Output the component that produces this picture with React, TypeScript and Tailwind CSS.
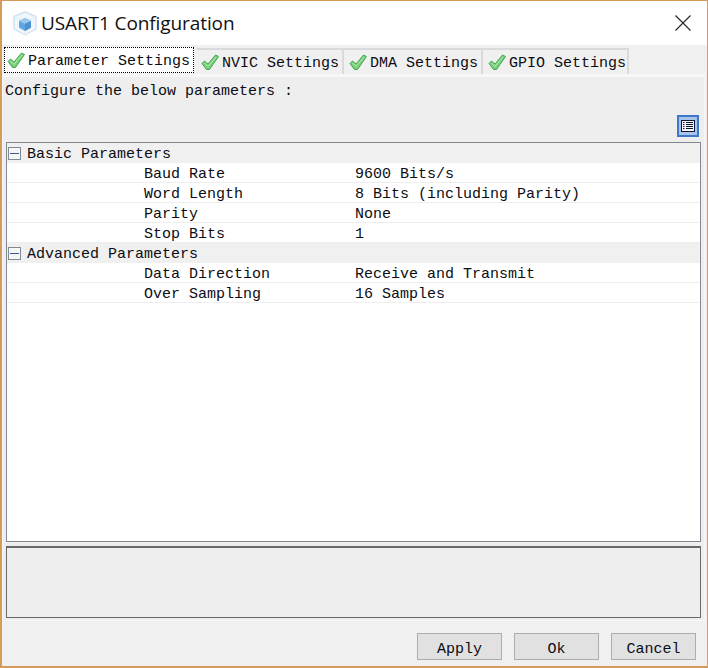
const mono = "font-['Liberation_Mono',monospace] text-[15px] text-[#0c0c14]";

function Check() {
  return (
    <svg width="18" height="17" viewBox="0 0 18 17" className="shrink-0">
      <path
        d="M1 9.5 L3.5 7 L7 10 L14.5 1 L17.5 2.5 L8.5 15.5 L5.5 15.5 Z"
        fill="#74cf78"
        stroke="#4aa552"
        strokeWidth="1"
        strokeLinejoin="round"
      />
      <path d="M3.5 9 L7 12.5 L15 3" fill="none" stroke="#b8ecb8" strokeWidth="1" />
    </svg>
  );
}

function CubeLogo() {
  return (
    <svg width="24" height="25" viewBox="0 0 24 25">
      <path d="M12 1 L23 5.5 V18 L12 24 L1 18 V5.5 Z" fill="#f0f6fc" stroke="#cfe2f3" strokeWidth="1.4" strokeLinejoin="round" />
      <path d="M1 5.5 L12 11 L23 5.5 M12 11 V24" fill="none" stroke="#e0ecf7" strokeWidth="1" />
      <path d="M12 7 L18 10 V16.5 L12 20 L6 16.5 V10 Z" fill="#5fa6e0" />
      <path d="M12 7 L18 10 L12 13 L6 10 Z" fill="#98c8ee" />
      <path d="M12 13 V20 L18 16.5 V10 Z" fill="#4c92d0" />
    </svg>
  );
}

function Tab({ label, className }: { label: string; className: string }) {
  return (
    <div className={`flex items-center h-[26px] border-t-2 border-r-2 border-[#dadada] bg-[#f0f0f0] ${className}`}>
      <Check />
      <span className={`${mono} pt-[4px] ml-[3px] whitespace-pre`}>{label}</span>
    </div>
  );
}

function GroupRow({ label }: { label: string }) {
  return (
    <div className="flex items-center h-[20px] bg-[#f0f0f0] pl-px">
      <div className="flex items-center justify-center w-[13px] h-[13px] border border-[#7f8a96] bg-[#f4f6f8]">
        <div className="w-[9px] h-px bg-[#3a5a8c]" />
      </div>
      <span className={`${mono} pt-[4px] ml-[6px] whitespace-pre`}>{label}</span>
    </div>
  );
}

function ParamRow({ name, value }: { name: string; value: string }) {
  return (
    <div className="flex items-center h-[20px] border-b border-[#eeeeee] bg-white">
      <span className={`${mono} pt-[6px] w-[348px] pl-[137px] whitespace-pre`}>{name}</span>
      <span className={`${mono} pt-[6px] whitespace-pre`}>{value}</span>
    </div>
  );
}

function FootButton({ label }: { label: string }) {
  return (
    <button className={`${mono} pt-[5px] w-[85px] h-[27px] bg-[#e1e1e1] border border-[#adadad]`}>
      {label}
    </button>
  );
}

export default function App() {
  return (
    <div className="flex flex-col w-[708px] h-[668px] bg-[#f0f0f0] border-t border-b-2 border-l-2 border-r border-[#d69a5a] overflow-hidden">
      <div className="flex items-center h-[44px] shrink-0 bg-white pl-[11px] pr-[16px]">
        <CubeLogo />
        <span className="ml-[4px] font-['Open_Sans',sans-serif] text-[19px] text-[#111] tracking-[-0.1px]">USART1 Configuration</span>
        <svg width="16" height="16" viewBox="0 0 16 16" className="ml-auto">
          <path d="M0.5 0.5 L15.5 15.5 M15.5 0.5 L0.5 15.5" stroke="#222" strokeWidth="1.1" />
        </svg>
      </div>

      <div className="flex items-end h-[29px] shrink-0 pl-[2px]">
        <div className="flex items-center w-[190px] h-[26px] bg-white border border-dotted border-black pl-[2px] mb-px">
          <Check />
          <span className={`${mono} pt-[4px] ml-[3px] whitespace-pre`}>Parameter Settings</span>
        </div>
        <Tab label="NVIC Settings" className="ml-[3px] w-[147px] pl-[4px]" />
        <Tab label="DMA Settings" className="w-[139px] pl-[5px]" />
        <Tab label="GPIO Settings" className="w-[146px] pl-[5px]" />
      </div>

      <div className="flex flex-col shrink-0 mr-[2px] border border-t-[3px] border-[#f8f8f8] bg-[#eeeeee] pl-[3px] pr-[3px] pb-[2px]">
        <div className={`${mono} h-[33px] shrink-0 pt-[4px] -ml-px`}>Configure the below parameters :</div>

        <div className="flex justify-end h-[32px] shrink-0 pt-[5px] pr-[2px]">
          <div className="flex items-center justify-center w-[22px] h-[22px] bg-[#a8c4ec] border-2 border-[#3e78c8]">
            <svg width="14" height="12" viewBox="0 0 14 12">
              <rect x="0.5" y="0.5" width="13" height="11" fill="#f4f6fb" stroke="#101838" />
              <path d="M2 2.5 H3.5 M5 2.5 H12 M2 4.5 H3.5 M5 4.5 H12 M2 6.5 H3.5 M5 6.5 H12 M2 8.5 H3.5 M5 8.5 H12" stroke="#101838" />
            </svg>
          </div>
        </div>

        <div className="h-[400px] shrink-0 border border-[#828790] bg-white">
          <GroupRow label="Basic Parameters" />
          <ParamRow name="Baud Rate" value="9600 Bits/s" />
          <ParamRow name="Word Length" value="8 Bits (including Parity)" />
          <ParamRow name="Parity" value="None" />
          <ParamRow name="Stop Bits" value="1" />
          <GroupRow label="Advanced Parameters" />
          <ParamRow name="Data Direction" value="Receive and Transmit" />
          <ParamRow name="Over Sampling" value="16 Samples" />
        </div>

        <div className="h-[72px] shrink-0 mt-[4px] border border-t-2 border-[#696969] bg-[#eeeeee]" />
      </div>

      <div className="flex justify-end gap-[12px] h-[44px] shrink-0 pr-[11px] pt-[12px]">
        <FootButton label="Apply" />
        <FootButton label="Ok" />
        <FootButton label="Cancel" />
      </div>
    </div>
  );
}
